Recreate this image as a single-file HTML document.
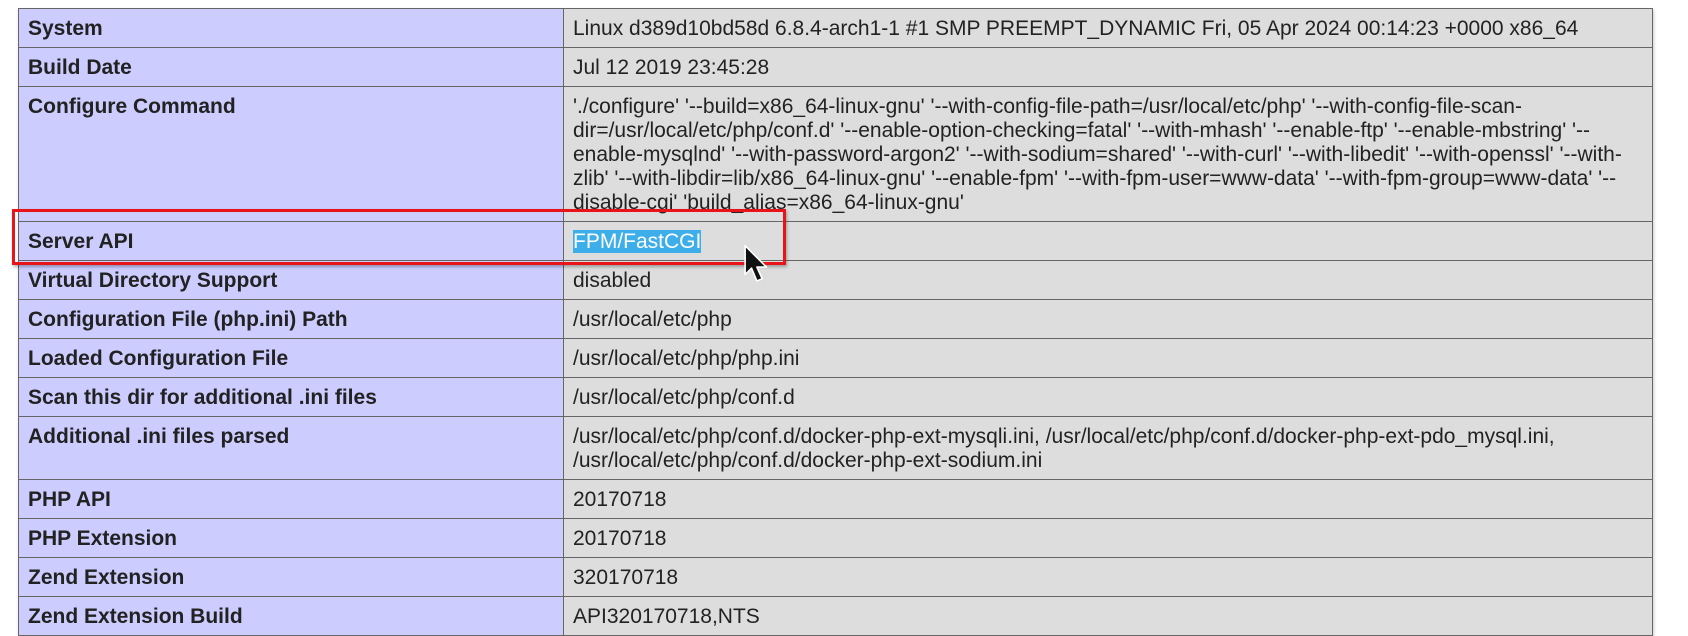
<!DOCTYPE html>
<html><head><meta charset="utf-8"><style>
html,body{margin:0;padding:0;background:#fff;width:1688px;height:600px;overflow:hidden;}
body{font-family:"Liberation Sans",Arial,sans-serif;color:#222;}
table{position:absolute;left:18px;top:8px;border-collapse:collapse;width:1635px;box-shadow:1px 2px 3px #ccc;table-layout:fixed;}
td{border:1px solid #666;font-size:21px;line-height:24px;padding:8px 9px 6px 9px;vertical-align:baseline;}
td.e{background:#ccf;font-weight:bold;width:526px;padding-left:9px;}
td.v{background:#ddd;word-break:break-all;}
.sel{background:#3daee9;color:#fff;}
.box{position:absolute;left:12px;top:209px;width:768px;height:50px;border:3px solid #e8141a;box-shadow:1px 2px 3px rgba(0,0,0,.3);}
</style></head><body>
<table>
<tr><td class="e">System</td><td class="v">Linux d389d10bd58d 6.8.4-arch1-1 #1 SMP PREEMPT_DYNAMIC Fri, 05 Apr 2024 00:14:23 +0000 x86_64</td></tr>
<tr><td class="e">Build Date</td><td class="v">Jul 12 2019 23:45:28</td></tr>
<tr><td class="e">Configure Command</td><td class="v">'./configure' '--build=x86_64-linux-gnu' '--with-config-file-path=/usr/local/etc/php' '--with-config-file-scan-<br>dir=/usr/local/etc/php/conf.d' '--enable-option-checking=fatal' '--with-mhash' '--enable-ftp' '--enable-mbstring' '--<br>enable-mysqlnd' '--with-password-argon2' '--with-sodium=shared' '--with-curl' '--with-libedit' '--with-openssl' '--with-<br>zlib' '--with-libdir=lib/x86_64-linux-gnu' '--enable-fpm' '--with-fpm-user=www-data' '--with-fpm-group=www-data' '--<br>disable-cgi' 'build_alias=x86_64-linux-gnu'</td></tr>
<tr><td class="e">Server API</td><td class="v"><span class="sel">FPM/FastCGI</span></td></tr>
<tr><td class="e">Virtual Directory Support</td><td class="v">disabled</td></tr>
<tr><td class="e">Configuration File (php.ini) Path</td><td class="v">/usr/local/etc/php</td></tr>
<tr><td class="e">Loaded Configuration File</td><td class="v">/usr/local/etc/php/php.ini</td></tr>
<tr><td class="e">Scan this dir for additional .ini files</td><td class="v">/usr/local/etc/php/conf.d</td></tr>
<tr><td class="e">Additional .ini files parsed</td><td class="v">/usr/local/etc/php/conf.d/docker-php-ext-mysqli.ini, /usr/local/etc/php/conf.d/docker-php-ext-pdo_mysql.ini,<br>/usr/local/etc/php/conf.d/docker-php-ext-sodium.ini</td></tr>
<tr><td class="e">PHP API</td><td class="v">20170718</td></tr>
<tr><td class="e">PHP Extension</td><td class="v">20170718</td></tr>
<tr><td class="e">Zend Extension</td><td class="v">320170718</td></tr>
<tr><td class="e">Zend Extension Build</td><td class="v">API320170718,NTS</td></tr>
</table>
<div class="box"></div>
<svg style="position:absolute;left:743px;top:244px" width="32" height="44" viewBox="0 0 30 40">
<path d="M2 1 L2 28 L8 22 L13 34 L18 32 L13 21 L22 21 Z" fill="#111" stroke="#fff" stroke-width="1.5" stroke-linejoin="round"/>
</svg>
</body></html>
